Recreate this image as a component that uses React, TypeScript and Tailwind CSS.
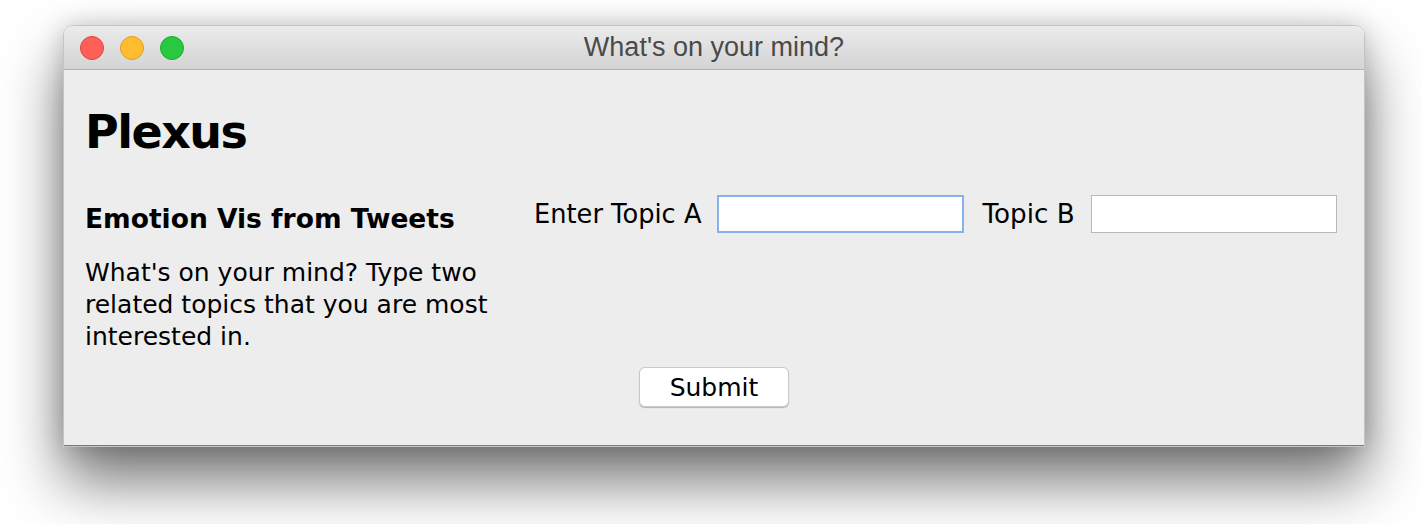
export default function App() {
  const body = { fontFamily: '"DejaVu Sans", "Liberation Sans", sans-serif' };

  return (
    <div className="min-h-[524px] w-full bg-white pl-[63px] pt-[25px]">
      <div className="w-[1302px] rounded-t-[10px] border border-[#c4c4c4] shadow-[0_34px_60px_rgba(0,0,0,0.55),0_0_24px_rgba(0,0,0,0.18)]">
        {/* title bar */}
        <div className="relative flex h-[44px] items-center rounded-t-[10px] border-b border-[#b4b4b4] bg-gradient-to-b from-[#ebebeb] to-[#d4d4d4] pl-[16px]">
          <div className="flex gap-[16px]">
            <span className="h-[24px] w-[24px] rounded-full border border-[#e0443e] bg-[#fe5f57]" />
            <span className="h-[24px] w-[24px] rounded-full border border-[#dea123] bg-[#febc2e]" />
            <span className="h-[24px] w-[24px] rounded-full border border-[#1aab29] bg-[#28c840]" />
          </div>
          <div
            className="absolute inset-0 flex items-center justify-center text-[27px] text-[#4a4a4a]"
            style={{ fontFamily: '"Liberation Sans", Arial, sans-serif' }}
          >
            What's on your mind?
          </div>
        </div>

        {/* content */}
        <div className="flex h-[376px] flex-col border-b border-[#7a7a7a] bg-[#ededed] pl-[21px] text-black" style={body}>
          <h1 className="mt-[38px] text-[46px] font-bold leading-[48px] tracking-[-1.5px]">Plexus</h1>

          <div className="mt-[39px] flex items-start">
            <div className="mt-[8px] w-[449px] shrink-0">
              <h2 className="text-[26.5px] font-bold leading-[32px]">Emotion Vis from Tweets</h2>
              <p className="mt-[22px] text-[25px] leading-[32px]">
                What's on your mind? Type two
                <br />
                related topics that you are most
                <br />
                interested in.
              </p>
            </div>

            <div className="flex shrink-0 items-center">
              <label className="text-[25.7px] leading-[38px]">Enter Topic A</label>
              <input
                type="text"
                className="ml-[16px] h-[38px] w-[247px] shrink-0 border-2 border-[#86b0ee] bg-white px-2 text-[22px] outline-none"
              />
              <label className="ml-[18px] text-[26.2px] leading-[38px]">Topic B</label>
              <input
                type="text"
                className="ml-[16px] h-[38px] w-[246px] shrink-0 border border-[#b9b9b9] bg-white px-2 text-[22px] outline-none"
              />
            </div>
          </div>

          <div className="mt-[14px] flex justify-center pr-[21px]">
            <button
              type="button"
              className="h-[40px] w-[150px] rounded-[6px] border border-[#c8c8c8] bg-white text-[25px] leading-none shadow-[0_1px_1px_rgba(0,0,0,0.25)]"
            >
              Submit
            </button>
          </div>
        </div>
      </div>
    </div>
  );
}
